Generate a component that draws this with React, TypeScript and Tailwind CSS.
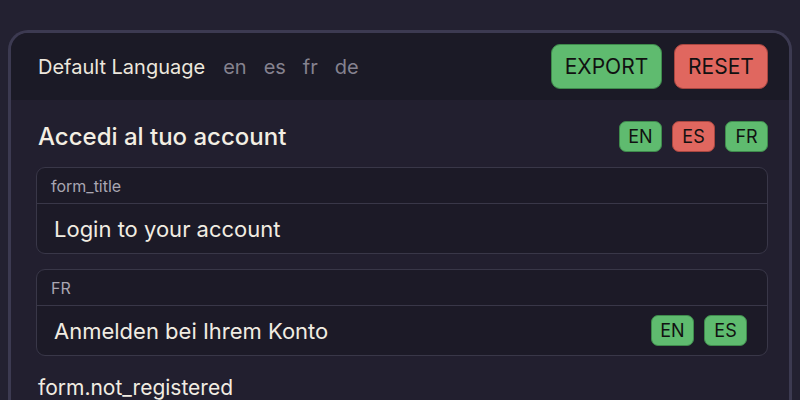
import React from 'react';

type Tone = 'green' | 'red';

const toneClass: Record<Tone, string> = {
  green: 'bg-[#5fbb6f] border-[#3e8a4c]',
  red: 'bg-[#e0675f] border-[#a84640]',
};

const Badge = ({ label, tone }: { label: string; tone: Tone }) => (
  <span
    className={`inline-flex items-center justify-center w-[43px] h-[31px] rounded-[7px] border text-[18px] leading-none text-[#111] ${toneClass[tone]}`}
  >
    {label}
  </span>
);

const Field = ({ label, value, badges }: { label: string; value: string; badges?: { label: string; tone: Tone }[] }) => (
  <div className="rounded-[9px] border border-[#393748] bg-[#1c1a27] overflow-hidden">
    <div className="h-[36px] flex items-center pl-[14px] text-[16px] text-[#a9a6b2] border-b border-[#393748]">
      {label}
    </div>
    <div className="h-[49px] flex items-center justify-between pl-[17px] pr-[20px]">
      <span className="text-[22px] leading-none text-[#f1ece2]">{value}</span>
      {badges && (
        <div className="flex gap-[10px]">
          {badges.map((b) => (
            <Badge key={b.label} label={b.label} tone={b.tone} />
          ))}
        </div>
      )}
    </div>
  </div>
);

export default function App() {
  const langs = ['en', 'es', 'fr', 'de'];

  return (
    <div
      className="w-[800px] h-[400px] overflow-hidden bg-[#232131] pt-[30px] px-[8px]"
      style={{ fontFamily: 'Inter, "Noto Sans", sans-serif' }}
    >
      <div className="h-[400px] rounded-t-[20px] border-[3px] border-b-0 border-[#3c3a51] bg-[#221f2f] overflow-hidden">
        {/* header */}
        <div className="h-[67px] flex items-center justify-between pl-[27px] pr-[21px] bg-[#1b1a26]">
          <div className="flex items-center">
            <span className="text-[20px] text-[#ece7dd]">Default Language</span>
            <div className="flex gap-[17px] ml-[18px] text-[20px] text-[#85828f]">
              {langs.map((l) => (
                <span key={l}>{l}</span>
              ))}
            </div>
          </div>
          <div className="flex gap-[12px]">
            <button className="w-[111px] h-[45px] rounded-[9px] border border-[#3e8a4c] bg-[#5fbb6f] text-[21px] text-[#111]">
              EXPORT
            </button>
            <button className="w-[94px] h-[45px] rounded-[9px] border border-[#a84640] bg-[#e0675f] text-[21px] text-[#111]">
              RESET
            </button>
          </div>
        </div>

        {/* body */}
        <div className="pl-[25px] pr-[21px] pt-[21px]">
          <div className="h-[31px] flex items-center justify-between pl-[2px]">
            <h1 className="text-[24px] leading-none font-medium text-[#f3eee3]">Accedi al tuo account</h1>
            <div className="flex gap-[10px]">
              <Badge label="EN" tone="green" />
              <Badge label="ES" tone="red" />
              <Badge label="FR" tone="green" />
            </div>
          </div>

          <div className="mt-[15px] flex flex-col gap-[15px]">
            <Field label="form_title" value="Login to your account" />
            <Field
              label="FR"
              value="Anmelden bei Ihrem Konto"
              badges={[
                { label: 'EN', tone: 'green' },
                { label: 'ES', tone: 'green' },
              ]}
            />
          </div>

          <div className="mt-[21px] pl-[2px] text-[21px] leading-none text-[#f1ece2]">form.not_registered</div>
        </div>
      </div>
    </div>
  );
}
